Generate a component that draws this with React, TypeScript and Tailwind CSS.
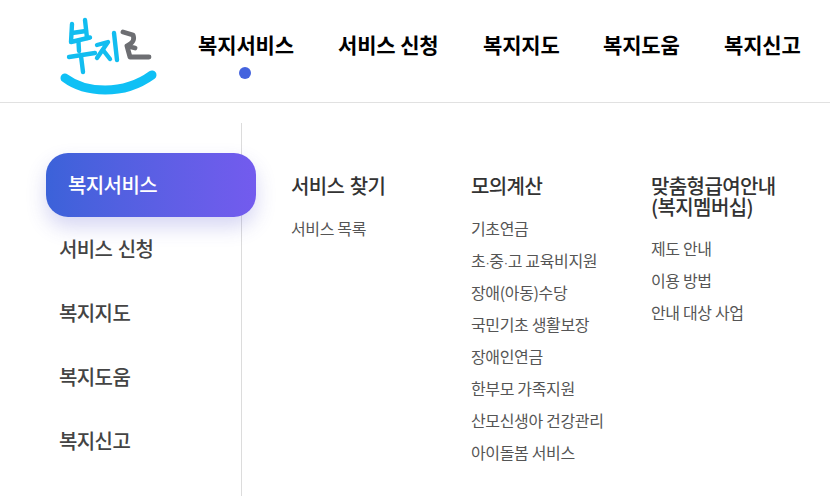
const font = "font-['Noto_Sans_CJK_KR','Noto_Sans',sans-serif]";

const topNav = [
  { label: "복지서비스", active: true, width: "w-[96px]", gap: "ml-[198px]" },
  { label: "서비스 신청", width: "w-[100px]", gap: "ml-[44px]" },
  { label: "복지지도", width: "w-[76px]", gap: "ml-[45px]" },
  { label: "복지도움", width: "w-[76px]", gap: "ml-[44px]" },
  { label: "복지신고", width: "w-[76px]", gap: "ml-[45px]" },
];

const sideNav = ["서비스 신청", "복지지도", "복지도움", "복지신고"];

const columns = [
  { title: ["서비스 찾기"], items: ["서비스 목록"], width: "w-[180px]", listGap: "mt-[16px]" },
  {
    title: ["모의계산"],
    items: [
      "기초연금",
      "초·중·고 교육비지원",
      "장애(아동)수당",
      "국민기초 생활보장",
      "장애인연금",
      "한부모 가족지원",
      "산모신생아 건강관리",
      "아이돌봄 서비스",
    ],
    width: "w-[180px]",
    listGap: "mt-[16px]",
  },
  {
    title: ["맞춤형급여안내", "(복지멤버십)"],
    items: ["제도 안내", "이용 방법", "안내 대상 사업"],
    width: "w-[170px]",
    listGap: "mt-[15px]",
  },
];

function Logo() {
  return (
    <svg width="110" height="85" viewBox="0 0 110 85" fill="none" className="absolute left-[55px] top-[15px]" strokeLinecap="round" strokeLinejoin="round">
      <g stroke="#12bdf0" strokeWidth="4.4">
        <path d="M17 9 L16 27 L35 22.5" />
        <path d="M17 18 L31 16" />
        <path d="M30 5 L32 23" />
        <path d="M23.5 27 L24 36" />
        <path d="M14 42 L40 38" />
        <path d="M26 41 L28 57" />
        <path d="M42 30 L53 27 L42 43" />
        <path d="M48 35 L55 44" />
        <path d="M59 18 L62 45" />
      </g>
      <path d="M68 17 L78 20 C80 25 78 28 72 31 L80 33 M72 31 L75 42 L94 42" stroke="#6d6e72" strokeWidth="4.8" />
      <path d="M10 63 C30 78 68 81 97 60" stroke="#0fc0f5" strokeWidth="9" />
    </svg>
  );
}

// the dots in "초·중·고" are narrow in the original, CJK font makes them too wide
function ItemText({ text }: { text: string }) {
  const parts = text.split("·");
  return (
    <>
      {parts.map((part, i) => (
        <span key={part}>
          {i > 0 && <span className="font-['Liberation_Sans'] text-[13px]">·</span>}
          {part}
        </span>
      ))}
    </>
  );
}

export default function App() {
  return (
    <div className={`relative h-[496px] w-[830px] overflow-hidden bg-white ${font}`}>
      <header className="relative flex h-[103px] items-start border-b border-[#e1e1e1]">
        <Logo />
        {topNav.map((item) => (
          <div key={item.label} className={`relative shrink-0 whitespace-nowrap pt-[28px] text-center text-[21px] leading-[32px] font-bold tracking-[-0.15px] text-black ${item.width} ${item.gap}`}>
            {item.label}
            {item.active && <span className="absolute left-[41px] top-[67px] h-3 w-3 rounded-full bg-[#4463de]" />}
          </div>
        ))}
      </header>
      <div className="flex h-[393px] pt-[20px]">
        <aside className="h-full w-[242px] shrink-0 border-r border-[#dcdcdc] pt-[30px]">
          <div className="relative z-10 ml-[46px] flex h-[64px] w-[210px] items-center rounded-[22px] bg-gradient-to-r from-[#3b62d9] to-[#735bee] pl-[22px] text-[20px] font-medium tracking-[-0.6px] text-white shadow-[0_10px_20px_rgba(70,70,200,0.22)]">
            복지서비스
          </div>
          {sideNav.map((label) => (
            <div key={label} className="ml-[59px] flex h-[64px] items-center text-[20px] font-medium tracking-[-0.6px] [word-spacing:1.5px] text-[#444444]">
              {label}
            </div>
          ))}
        </aside>
        <main className="flex pl-[49px] pt-[52px]">
          {columns.map((col) => (
            <section key={col.title[0]} className={col.width}>
              <h3 className="text-[20px] leading-[21px] font-medium tracking-[-0.6px] [word-spacing:1.5px] text-[#333333]">
                {col.title.map((line) => (
                  <div key={line}>{line}</div>
                ))}
              </h3>
              <ul className={col.listGap}>
                {col.items.map((item) => (
                  <li key={item} className="h-[32px] text-[16px] leading-[32px] tracking-[-0.35px] whitespace-nowrap text-[#555555]">
                    <ItemText text={item} />
                  </li>
                ))}
              </ul>
            </section>
          ))}
        </main>
      </div>
    </div>
  );
}
